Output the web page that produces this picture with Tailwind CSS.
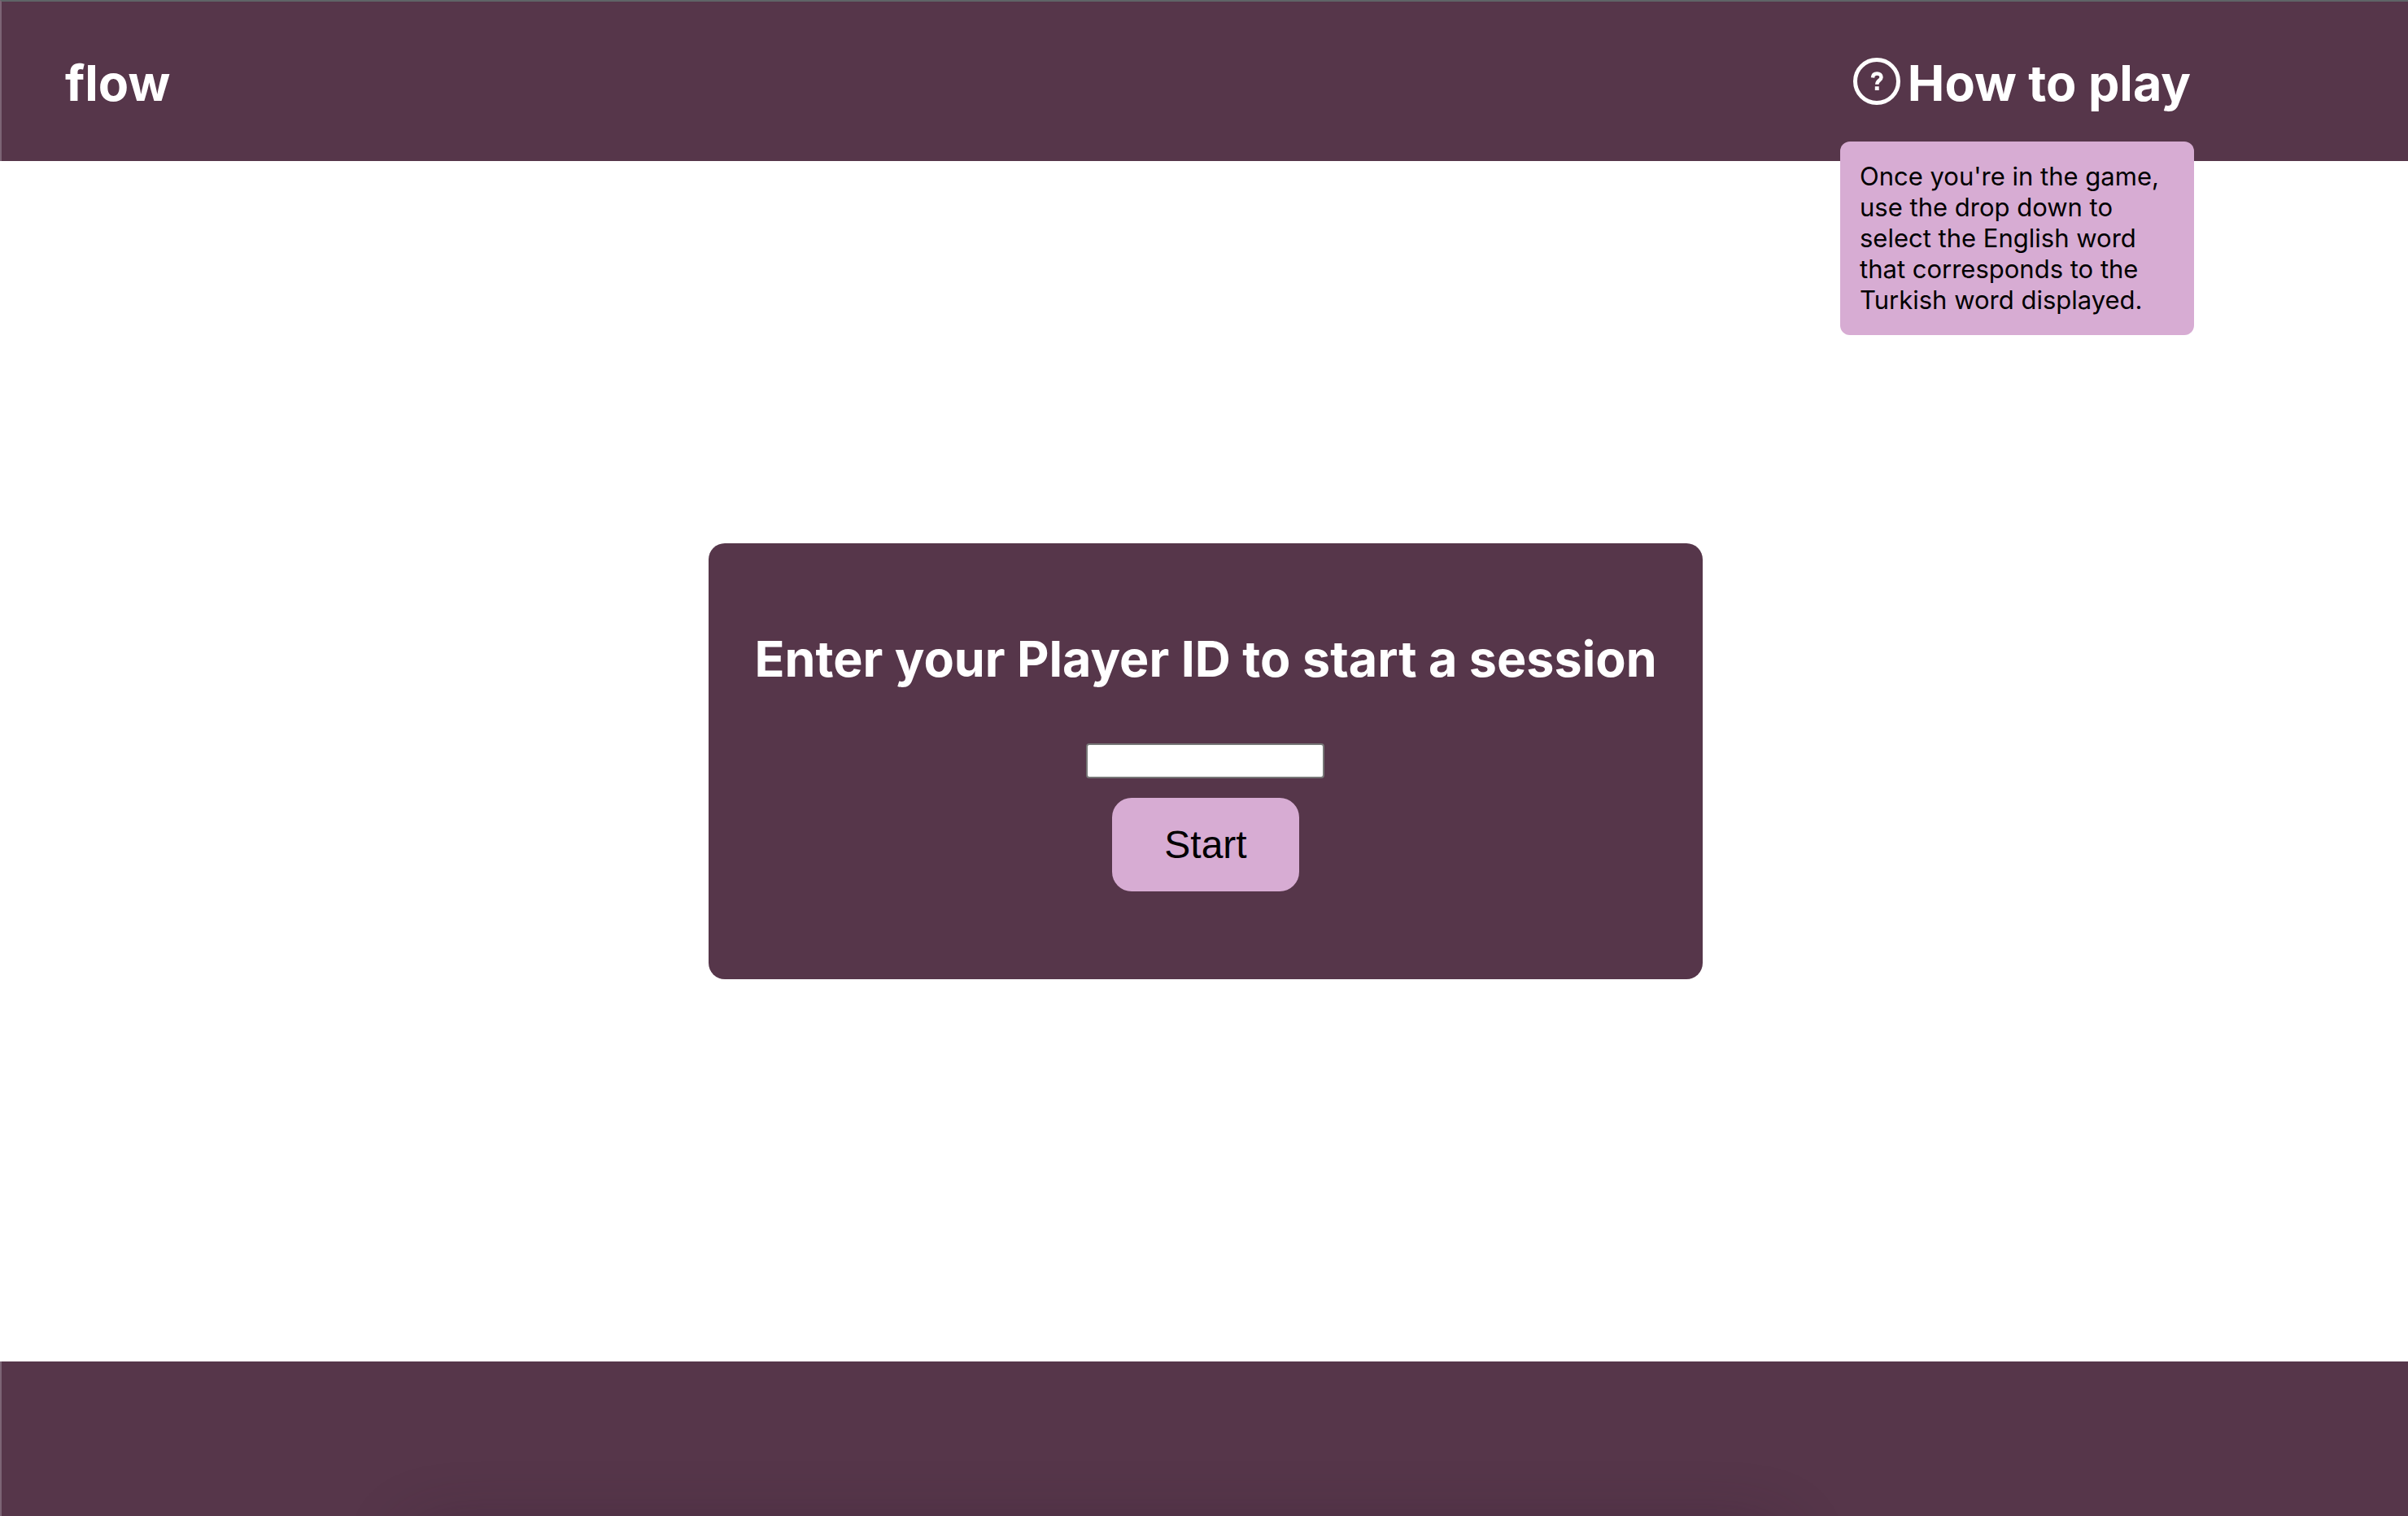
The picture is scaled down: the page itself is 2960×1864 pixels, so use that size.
<!DOCTYPE html>
<html lang="en">
<head>
<meta charset="utf-8">
<title>flow</title>
<script src="https://cdn.jsdelivr.net/npm/@tailwindcss/browser@4"></script>
</head>
<body class="flex min-h-screen flex-col bg-white font-['Inter',sans-serif] text-black">
  <header class="flex h-[198px] items-center justify-between border-t-2 border-l-2 border-t-[#5f6467] border-l-[#7c6475] bg-[#56364a] pt-1 pr-[267px] pl-[78px] text-white">
    <h1 class="text-[61px] leading-[76px] font-bold">flow</h1>
    <div class="relative">
      <button type="button" aria-describedby="help" class="flex items-center gap-2 text-[61px] leading-[76px] font-bold">
        <svg class="size-[60px] overflow-visible" viewBox="0 0 60 60" fill="none" aria-hidden="true">
          <circle cx="30" cy="28" r="26.5" stroke="#fff" stroke-width="5"/>
          <path d="M25 23.500c.2-3.300 2.200-5 5.300-5 3.200 0 5.200 1.700 5.200 4.500 0 4-5.200 3.700-5.200 8.800" stroke="#fff" stroke-width="4.500"/>
          <path d="M27.800 34.300h4.900v4.700h-4.900z" fill="#fff"/>
        </svg>
        <span>How to play</span>
      </button>
      <p id="help" role="tooltip" class="absolute top-full -right-1 mt-[34px] w-[435px] rounded-xl bg-[#d7acd3] p-6 text-[31px] leading-[38px] text-black">Once you're in the game, use the drop down to select the English word that corresponds to the Turkish word displayed.</p>
    </div>
  </header>
  <main class="flex grow items-center justify-center pl-1">
    <form class="flex flex-col items-center rounded-[20px] bg-[#56364a] px-14 pt-[104px] pb-[108px]">
      <label for="player" class="text-[61px] leading-[76px] font-bold text-white">Enter your Player ID to start a session</label>
      <input id="player" type="text" class="mt-[66px] h-[43px] w-[293px] rounded-[4px] border-2 border-[#767676] bg-white px-1 text-[26px]">
      <button type="button" class="mt-6 h-[115px] w-[230px] rounded-3xl bg-[#d7acd3] font-['Liberation_Sans',sans-serif] text-5xl">Start</button>
    </form>
  </main>
  <footer class="relative h-[190px] overflow-hidden border-l-2 border-l-[#7c6475] bg-[#56364a]">
    <div class="absolute top-full right-[26%] left-[17%] mt-5 h-20 rounded-[40px] shadow-[0_0_80px_rgba(48,24,44,0.4)]"></div>
  </footer>
</body>
</html>
